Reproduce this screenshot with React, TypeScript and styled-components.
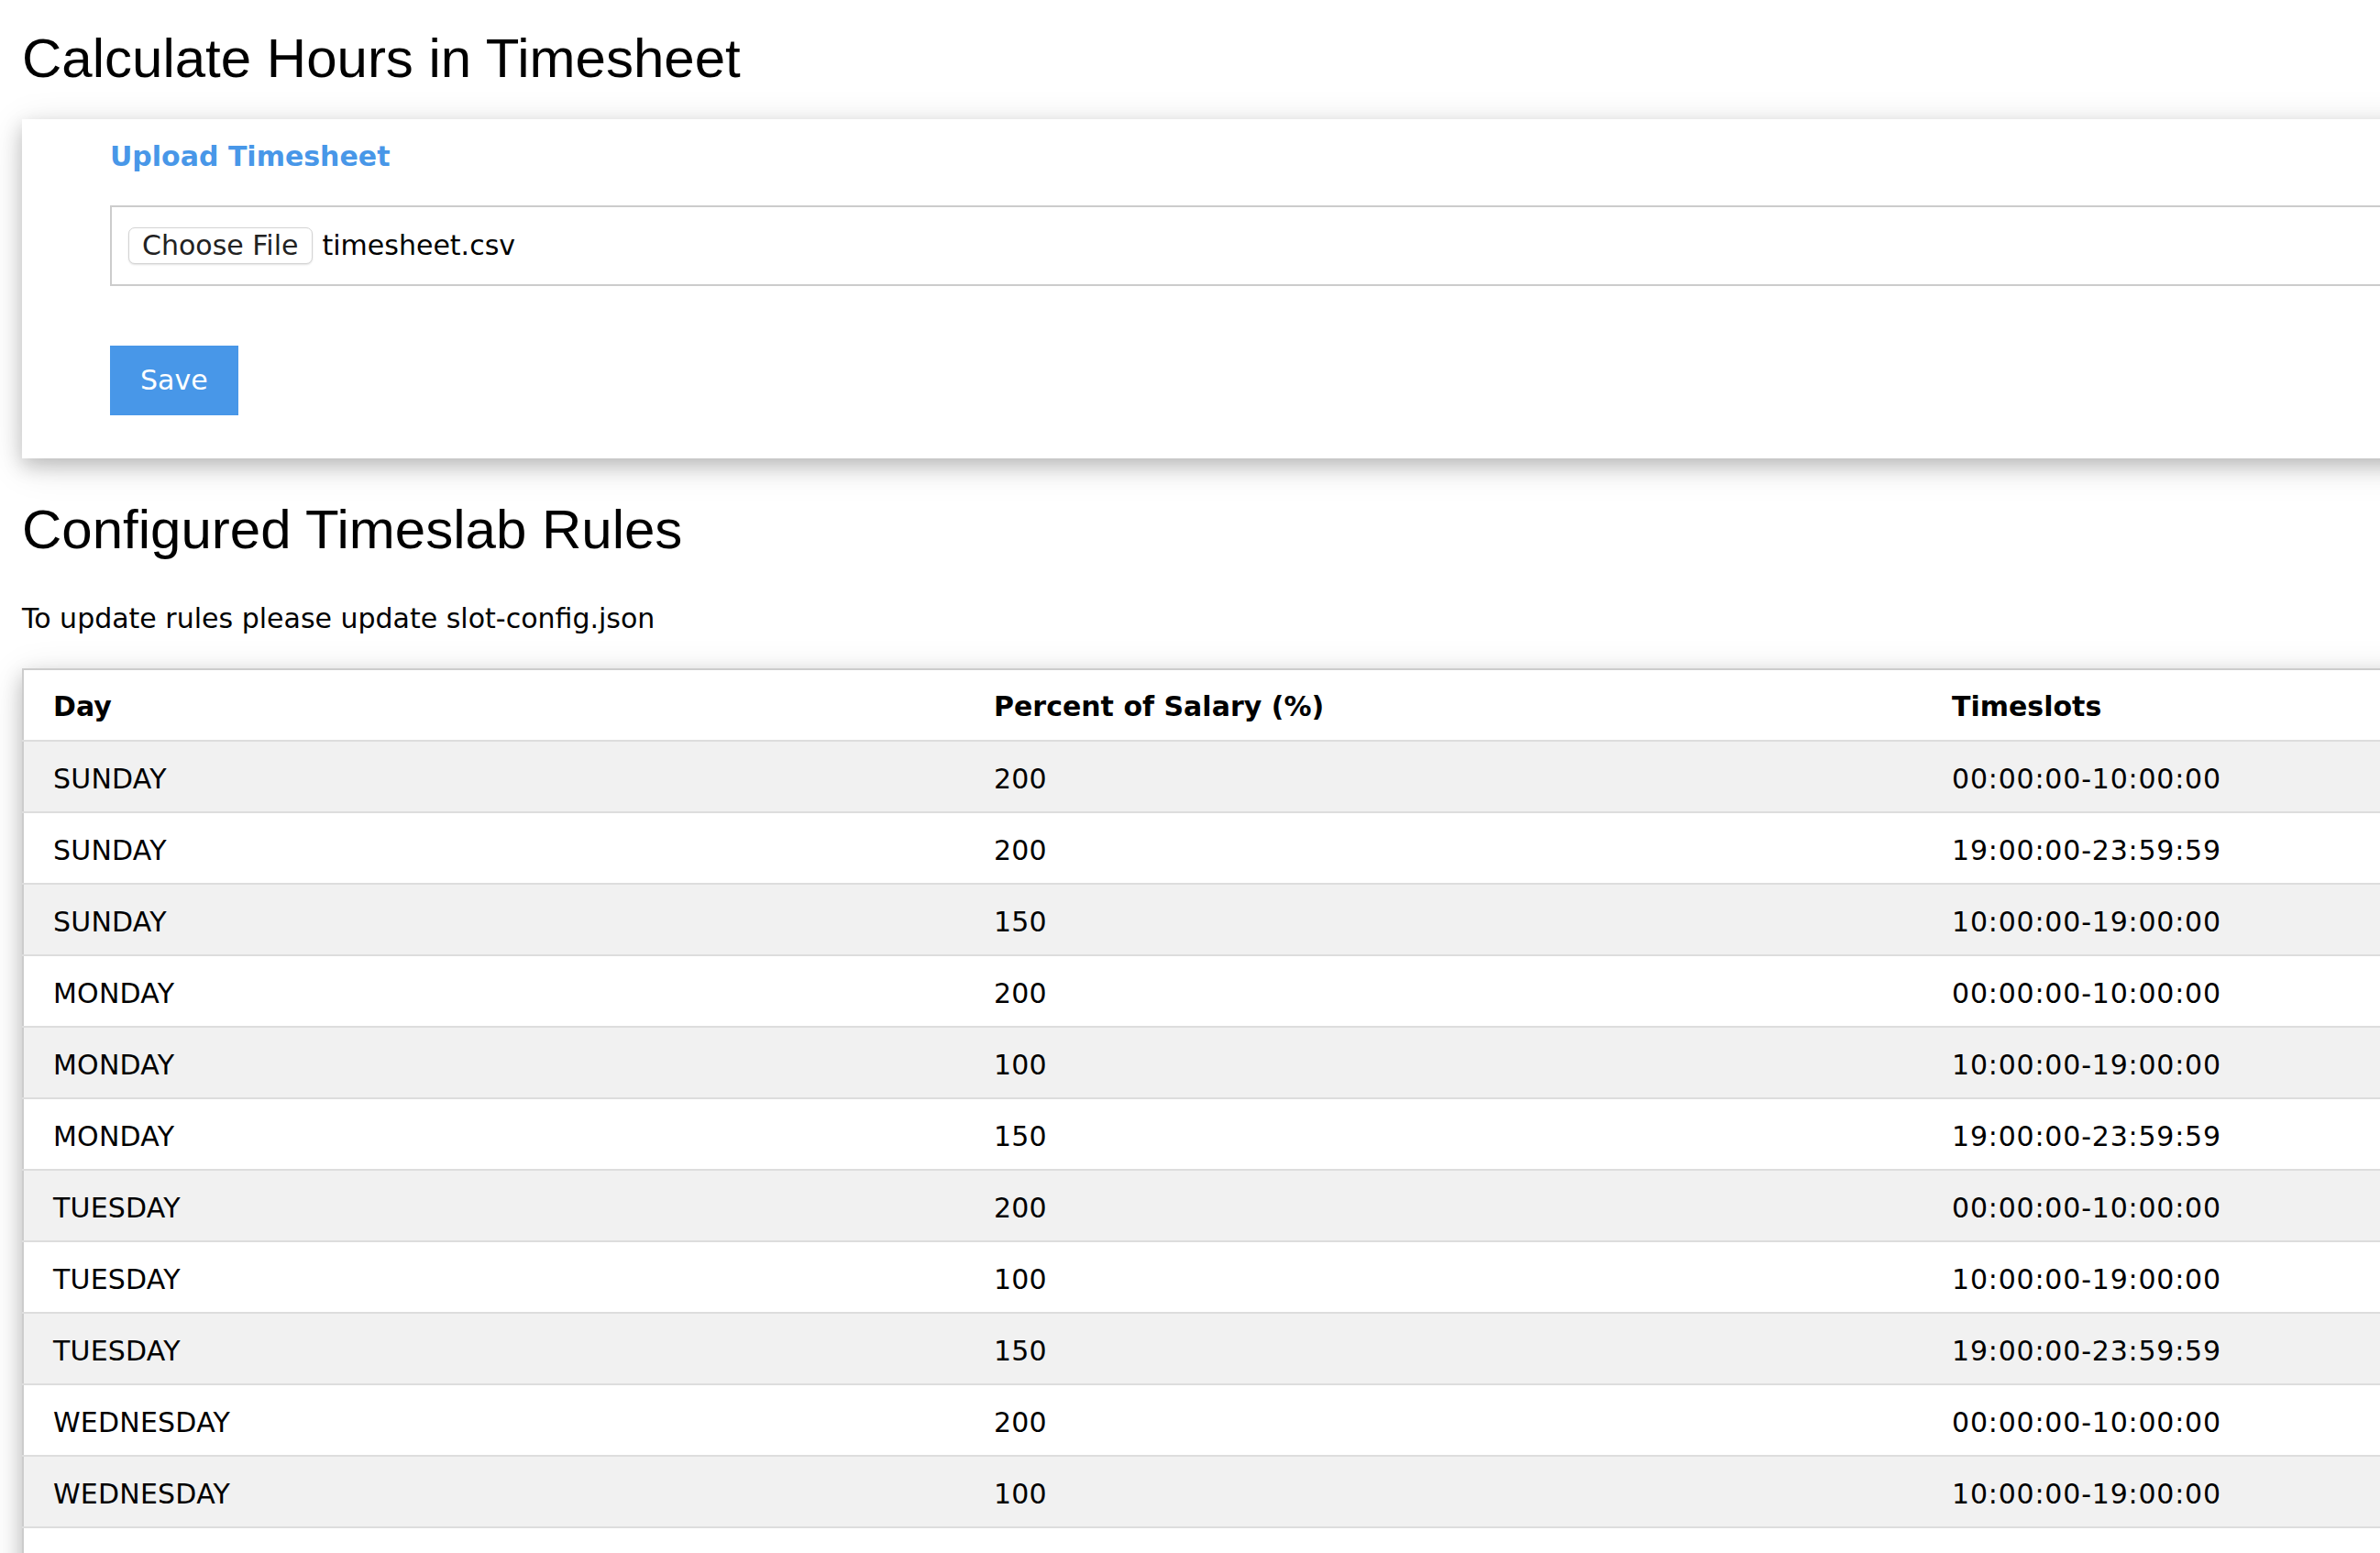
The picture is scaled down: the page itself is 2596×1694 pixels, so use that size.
import React from 'react';
import styled, { createGlobalStyle } from 'styled-components';

const GlobalStyle = createGlobalStyle`
  html, body {
    margin: 0;
    padding: 0;
    background: #ffffff;
    overflow: hidden;
  }

  body {
    font-family: "DejaVu Sans", Verdana, sans-serif;
    font-size: 30px;
    line-height: 36px;
    color: #000;
  }
`

const Page = styled.div`
  width: 2900px;
  padding: 30px 0 60px 24px;
  box-sizing: border-box;
`

const Title = styled.h1<{ $gap?: number }>`
  margin: ${(p) => p.$gap ?? 0}px 0 0 0;
  font-family: "Liberation Sans", Arial, sans-serif;
  font-weight: 400;
  font-size: 60px;
  line-height: 68px;
  color: #000;
`

const Card = styled.div`
  margin-top: 32px;
  padding: 23px 96px 47px 96px;
  background: #fff;
  box-shadow: 0 8px 20px 0 rgba(0, 0, 0, 0.2), 0 8px 40px 0 rgba(0, 0, 0, 0.12);
`

const Label = styled.div`
  font-weight: 700;
  color: #4897e8;
`

const FileBox = styled.div`
  margin-top: 35px;
  height: 88px;
  box-sizing: border-box;
  border: 2px solid #cccccc;
  padding: 0 18px;
  display: flex;
  align-items: center;
  gap: 11px;
`

const ChooseButton = styled.button`
  height: 40px;
  box-sizing: border-box;
  padding: 0 14px;
  font-family: "DejaVu Sans", Verdana, sans-serif;
  font-size: 30px;
  line-height: 36px;
  color: #222;
  background: #fff;
  border: 1px solid #d4d4d4;
  border-radius: 7px;
  box-shadow: 0 1px 2px rgba(0, 0, 0, 0.12);
`

const FileName = styled.span`
  color: #000;
`

const SaveButton = styled.button`
  display: block;
  margin-top: 65px;
  padding: 20px 33px;
  font-family: "DejaVu Sans", Verdana, sans-serif;
  font-size: 30px;
  line-height: 36px;
  color: #fff;
  background: #4897e8;
  border: none;
`

const Note = styled.p`
  margin: 45px 0 0 0;
`

const Table = styled.table`
  margin-top: 36px;
  width: 2860px;
  border-collapse: collapse;
  table-layout: fixed;
  border: 2px solid #cccccc;
  box-shadow: 0 8px 20px 0 rgba(0, 0, 0, 0.2), 0 8px 40px 0 rgba(0, 0, 0, 0.12);
`

const Row = styled.tr`
  border-bottom: 2px solid #dddddd;
  background: #fff;

  tbody &:nth-child(odd) {
    background: #f1f1f1;
  }
`

const HeadCell = styled.th`
  padding: 22px 32px 18px 32px;
  text-align: left;
  font-weight: 700;
`

const Cell = styled.td<{ $time?: boolean }>`
  padding: 23px 32px 17px 32px;
  text-align: left;
  letter-spacing: ${(p) => (p.$time ? '0.8px' : '0.2px')};
`

type Rule = { day: string; percent: number; slot: string };

const rules: Rule[] = [
  { day: 'SUNDAY', percent: 200, slot: '00:00:00-10:00:00' },
  { day: 'SUNDAY', percent: 200, slot: '19:00:00-23:59:59' },
  { day: 'SUNDAY', percent: 150, slot: '10:00:00-19:00:00' },
  { day: 'MONDAY', percent: 200, slot: '00:00:00-10:00:00' },
  { day: 'MONDAY', percent: 100, slot: '10:00:00-19:00:00' },
  { day: 'MONDAY', percent: 150, slot: '19:00:00-23:59:59' },
  { day: 'TUESDAY', percent: 200, slot: '00:00:00-10:00:00' },
  { day: 'TUESDAY', percent: 100, slot: '10:00:00-19:00:00' },
  { day: 'TUESDAY', percent: 150, slot: '19:00:00-23:59:59' },
  { day: 'WEDNESDAY', percent: 200, slot: '00:00:00-10:00:00' },
  { day: 'WEDNESDAY', percent: 100, slot: '10:00:00-19:00:00' },
  { day: 'WEDNESDAY', percent: 150, slot: '19:00:00-23:59:59' },
  { day: 'THURSDAY', percent: 200, slot: '00:00:00-10:00:00' },
  { day: 'THURSDAY', percent: 100, slot: '10:00:00-19:00:00' },
]

export default function App() {
  return (
    <>
      <GlobalStyle />
      <Page>
        <Title>Calculate Hours in Timesheet</Title>
        <Card>
          <Label>Upload Timesheet</Label>
          <FileBox>
            <ChooseButton type='button'>Choose File</ChooseButton>
            <FileName>timesheet.csv</FileName>
          </FileBox>
          <SaveButton type='button'>Save</SaveButton>
        </Card>

        <Title $gap={44}>Configured Timeslab Rules</Title>
        <Note>To update rules please update slot-config.json</Note>

        <Table>
          <colgroup>
            <col style={{ width: 1027 }} />
            <col style={{ width: 1045 }} />
            <col />
          </colgroup>
          <thead>
            <Row>
              <HeadCell>Day</HeadCell>
              <HeadCell>Percent of Salary (%)</HeadCell>
              <HeadCell>Timeslots</HeadCell>
            </Row>
          </thead>
          <tbody>
            {rules.map((r, i) => (
              <Row key={i}>
                <Cell>{r.day}</Cell>
                <Cell>{r.percent}</Cell>
                <Cell $time>{r.slot}</Cell>
              </Row>
            ))}
          </tbody>
        </Table>
      </Page>
    </>
  );
}
